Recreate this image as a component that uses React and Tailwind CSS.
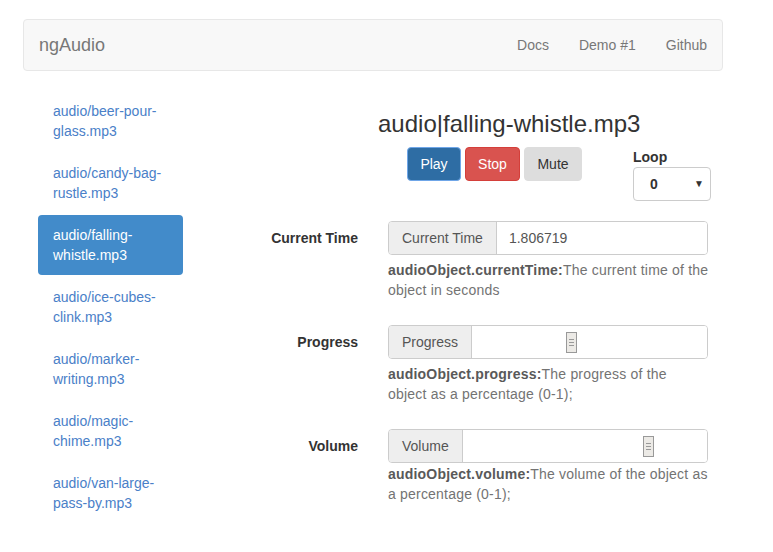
import { useState } from "react";

const files = [
  ["audio/beer-pour-", "glass.mp3"],
  ["audio/candy-bag-", "rustle.mp3"],
  ["audio/falling-", "whistle.mp3"],
  ["audio/ice-cubes-", "clink.mp3"],
  ["audio/marker-", "writing.mp3"],
  ["audio/magic-", "chime.mp3"],
  ["audio/van-large-", "pass-by.mp3"],
];

function Thumb() {
  return (
    <div className="w-[11px] h-[21px] border border-[#999] bg-[#eceae6] flex flex-col items-center justify-center gap-[2px]">
      <div className="w-[5px] h-px bg-[#999]" />
      <div className="w-[5px] h-px bg-[#999]" />
      <div className="w-[5px] h-px bg-[#999]" />
    </div>
  );
}

function FormRow({ label, addon, children, help, desc, desc2, tight }) {
  return (
    <div className="flex mb-[15px]">
      <div className="w-[175px] pr-[15px] pt-[7px] text-right font-bold text-[#333] leading-5">
        {label}
      </div>
      <div className="w-[320px] ml-[15px]">
        <div className="flex h-[34px] border border-[#ccc] rounded-[4px] overflow-hidden">
          <div className="px-[13px] flex items-center bg-[#eee] border-r border-[#ccc] text-[#555]">
            {addon}
          </div>
          <div className="flex-1 flex items-center bg-white text-[#555]">
            {children}
          </div>
        </div>
        <p
          className={
            (tight ? "mt-[1px]" : "mt-[5px]") +
            " mb-[10px] text-[#737373] leading-5 tracking-[0.2px] whitespace-nowrap"
          }
        >
          <b className="text-[#595959]">{help}</b>
          {desc}
          <br />
          {desc2}
        </p>
      </div>
    </div>
  );
}

export default function App() {
  const [selected, setSelected] = useState(2);

  return (
    <div
      className="w-[773px] min-h-[552px] bg-white text-[14px] text-[#333] leading-5"
      style={{ fontFamily: '"Liberation Sans", Arial, sans-serif' }}
    >
      <div className="pt-[19px] pl-[23px] w-[723px]">
        <div className="h-[52px] bg-[#f8f8f8] border border-[#e7e7e7] rounded-[4px] flex items-center justify-between">
          <a className="pl-[15px] text-[18px] text-[#777]">ngAudio</a>
          <div className="flex text-[#777]">
            <a className="px-[15px]">Docs</a>
            <a className="px-[15px]">Demo #1</a>
            <a className="px-[15px]">Github</a>
          </div>
        </div>

        <div className="flex mt-[20px]">
          <ul className="w-[175px] pl-[15px]">
            {files.map((f, i) => (
              <li key={f[0]} className={i > 0 ? "mt-[2px]" : ""}>
                <a
                  onClick={() => setSelected(i)}
                  className={
                    "block w-[145px] h-[60px] px-[15px] py-[10px] rounded-[4px] cursor-pointer " +
                    (i === selected ? "bg-[#428bca] text-white" : "text-[#4a80c8]")
                  }
                >
                  <span className="block">{f[0]}</span>
                  <span className="block">{f[1]}</span>
                </a>
              </li>
            ))}
          </ul>

          <div className="w-[525px]">
            <h3 className="mt-[20px] mb-[10px] ml-[180px] w-[262px] text-center whitespace-nowrap text-[24px] leading-[26px] text-[#333]">
              audio|{files[selected][0].slice(6)}{files[selected][1]}
            </h3>

            <div className="flex">
              <div className="flex gap-[4px] ml-[209px] h-[34px]">
                <button className="h-[34px] w-[54px] rounded-[4px] bg-[#2e6da4] border border-[#6fa6e8] text-white">
                  Play
                </button>
                <button className="h-[34px] w-[55px] rounded-[4px] bg-[#d9534f] border border-[#d43f3a] text-white">
                  Stop
                </button>
                <button className="h-[34px] w-[58px] rounded-[4px] bg-[#ddd] border border-[#ddd] text-[#333]">
                  Mute
                </button>
              </div>
              <div className="ml-[51px]">
                <div className="font-bold h-[20px]">Loop</div>
                <div className="w-[78px] h-[34px] border border-[#ccc] rounded-[4px] flex items-center justify-between pl-[16px] pr-[6px] font-bold">
                  <span>0</span>
                  <span className="text-[10px]">▼</span>
                </div>
              </div>
            </div>

            <div className="mt-[20px]">
              <FormRow
                label="Current Time"
                addon="Current Time"
                help="audioObject.currentTime:"
                desc="The current time of the"
                desc2="object in seconds"
              >
                <span className="pl-3">1.806719</span>
              </FormRow>
              <FormRow
                label="Progress"
                addon="Progress"
                help="audioObject.progress:"
                desc="The progress of the"
                desc2="object as a percentage (0-1);"
              >
                <div className="pl-[94px]">
                  <Thumb />
                </div>
              </FormRow>
              <FormRow
                label="Volume"
                addon="Volume"
                help="audioObject.volume:"
                desc="The volume of the object as"
                desc2="a percentage (0-1);"
                tight
              >
                <div className="pl-[180px]">
                  <Thumb />
                </div>
              </FormRow>
            </div>
          </div>
        </div>
      </div>
    </div>
  );
}
